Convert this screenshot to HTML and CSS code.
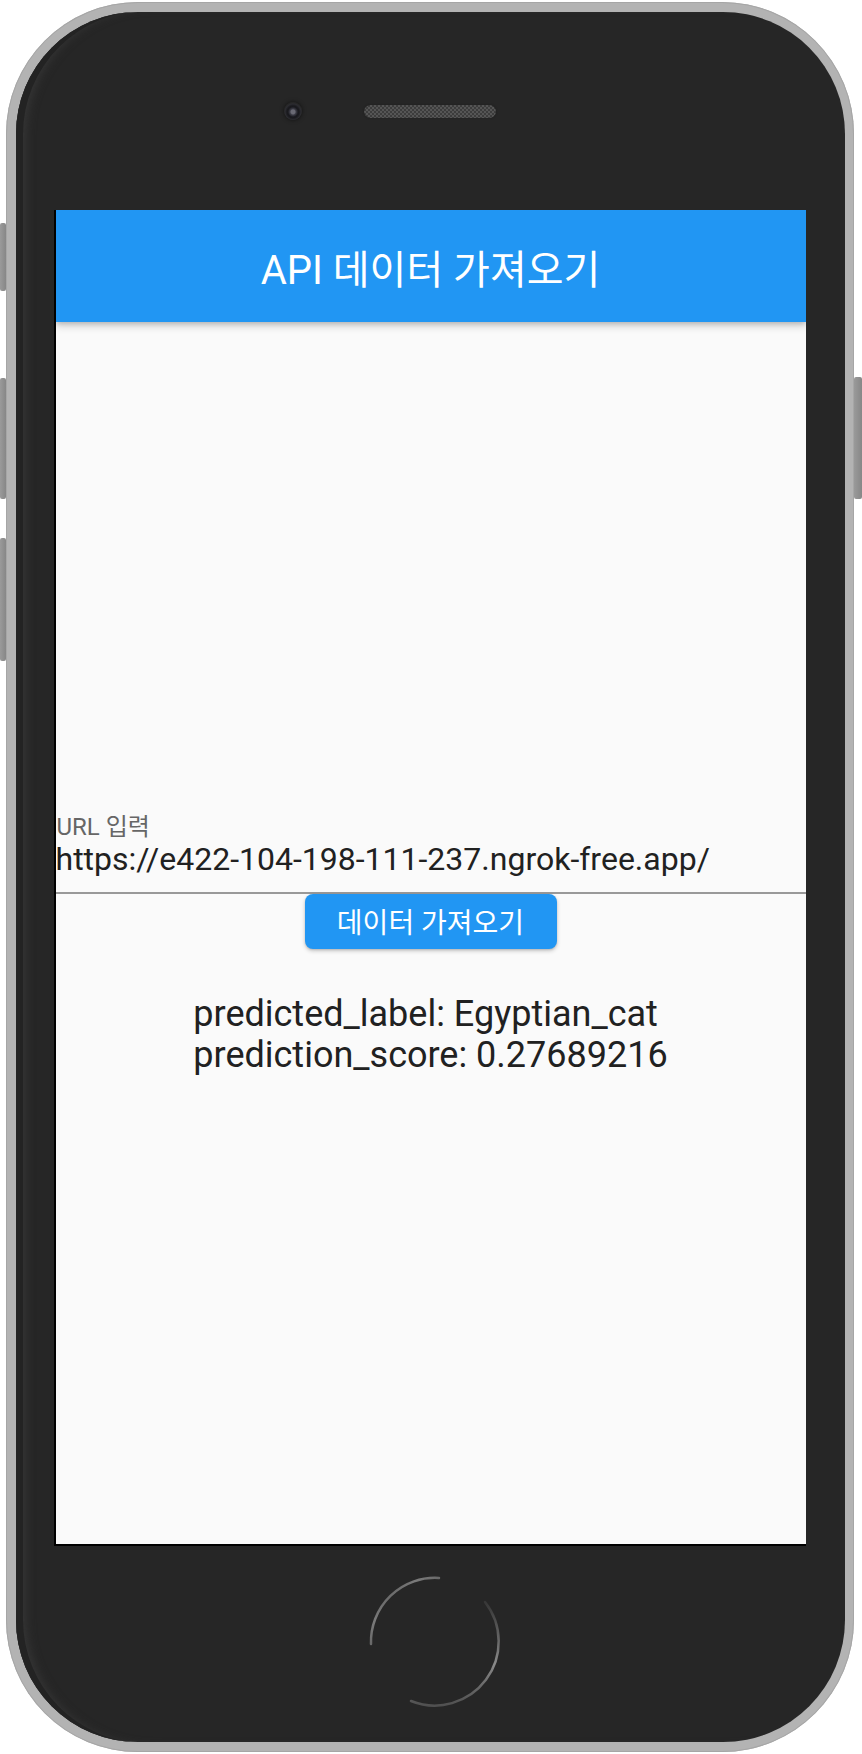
FILE: index.html
```html
<!DOCTYPE html>
<html lang="ko">
<head>
<meta charset="utf-8">
<title>API 데이터 가져오기</title>
<link rel="stylesheet" href="styles.css">
</head>
<body>
<div class="device">
  <span class="side-btn left b1"></span>
  <span class="side-btn left b2"></span>
  <span class="side-btn left b3"></span>
  <span class="side-btn right b4"></span>
  <div class="bezel">
    <div class="top-area">
      <div class="sensors">
        <span class="camera"></span>
        <span class="speaker"></span>
      </div>
    </div>
    <div class="screen">
      <header class="appbar">API 데이터 가져오기</header>
      <main class="content">
        <div class="field">
          <div class="field-label">URL 입력</div>
          <div class="field-value">https://e422-104-198-111-237.ngrok-free.app/</div>
        </div>
        <div class="btn-row">
          <button class="btn">데이터 가져오기</button>
        </div>
        <div class="result">
          <div class="result-text">
            <div>predicted_label: Egyptian_cat</div>
            <div>prediction_score: 0.27689216</div>
          </div>
        </div>
      </main>
    </div>
    <div class="bottom-area">
      <svg class="home" width="140" height="140" viewBox="0 0 140 140">
        <defs>
          <linearGradient id="ga" x1="0" y1="0" x2="1" y2="1">
            <stop offset="0" stop-color="#7a7a7a" stop-opacity="0.2"/>
            <stop offset="0.35" stop-color="#7a7a7a" stop-opacity="1"/>
            <stop offset="1" stop-color="#7a7a7a" stop-opacity="0.1"/>
          </linearGradient>
          <linearGradient id="gb" x1="0" y1="0" x2="0" y2="1">
            <stop offset="0" stop-color="#7a7a7a" stop-opacity="0.2"/>
            <stop offset="0.6" stop-color="#8a8a8a" stop-opacity="1"/>
            <stop offset="1" stop-color="#7a7a7a" stop-opacity="0.5"/>
          </linearGradient>
        </defs>
        <path d="M74 6 A64 64 0 0 0 6 72" fill="none" stroke="url(#ga)" stroke-width="2.5" stroke-linecap="round"/>
        <path d="M120 30 A64 64 0 0 1 46 129" fill="none" stroke="url(#gb)" stroke-width="2.5" stroke-linecap="round"/>
      </svg>
    </div>
  </div>
</div>
</body>
</html>
```
FILE: styles.css
```css
html, body {
  margin: 0;
  padding: 0;
  background: #ffffff;
}
body {
  width: 862px;
  height: 1754px;
  overflow: hidden;
  font-family: Roboto, "Noto Sans CJK KR", sans-serif;
}
.device {
  position: relative;
  box-sizing: border-box;
  width: 848px;
  height: 1750px;
  margin: 2px 0 0 6px;
  padding: 10px 9px 10px 10px;
  border-radius: 132px;
  background: #b3b3b3;
  box-shadow: inset 0 0 0 1px #a6a6a6;
}
.side-btn {
  position: absolute;
  background: linear-gradient(90deg, #9a9a9a, #878787);
  border-radius: 2px;
}
.side-btn.left { left: -6px; width: 6px; }
.side-btn.right { right: -8px; width: 8px; }
.b1 { top: 221px; height: 68px; }
.b2 { top: 376px; height: 121px; }
.b3 { top: 536px; height: 123px; }
.b4 { top: 375px; height: 122px; }

.bezel {
  box-sizing: border-box;
  height: 100%;
  border-radius: 122px;
  background: #262626;
  box-shadow: inset 8px 0 0 -1px #232323, inset 16px 0 10px -6px #363636;
  display: flex;
  flex-direction: column;
  align-items: center;
}
.top-area {
  align-self: stretch;
  height: 198px;
  box-sizing: border-box;
  padding-top: 90px;
}
.sensors {
  display: flex;
  align-items: center;
  gap: 62px;
  padding-left: 268px;
  height: 18px;
}
.camera {
  width: 18px;
  height: 18px;
  border-radius: 50%;
  background: radial-gradient(circle at 50% 55%, #6a6a74 0 2px, #3e3e48 3px, #1a1a1f 5px, #19191d 6px, #2c2c31 8px, #262626 9px);
  box-shadow: 0 0 4px rgba(0,0,0,0.6);
}
.speaker {
  width: 132px;
  height: 13px;
  border-radius: 7px;
  background-color: #3c3c3c;
  background-image:
    linear-gradient(45deg, #555 25%, transparent 25%, transparent 75%, #555 75%),
    linear-gradient(45deg, #555 25%, transparent 25%, transparent 75%, #555 75%);
  background-size: 4px 4px;
  background-position: 0 0, 2px 2px;
  box-shadow: 0 0 2px #1c1c1c;
}
.screen {
  width: 750px;
  height: 1334px;
  border-left: 2px solid #000;
  border-bottom: 2px solid #000;
  margin-right: 2px;
  background: #fafafa;
  display: flex;
  flex-direction: column;
  overflow: hidden;
}
.appbar {
  height: 112px;
  flex: none;
  background: #2196f3;
  color: #fff;
  font-size: 40px;
  display: flex;
  align-items: center;
  justify-content: center;
  box-shadow: 0 4px 8px rgba(0,0,0,0.18), 0 2px 4px rgba(0,0,0,0.12);
  position: relative;
  z-index: 1;
  padding-top: 2px;
  box-sizing: border-box;
}
.content {
  flex: 1;
  padding-top: 491px;
  display: flex;
  flex-direction: column;
}
.field {
  border-bottom: 2px solid #999;
  padding-bottom: 15px;
}
.field-label {
  font-size: 24px;
  line-height: 28px;
  color: #666;
  padding-left: 1px;
}
.field-value {
  font-size: 32px;
  line-height: 36px;
  color: #212121;
  white-space: nowrap;
}
.btn-row {
  display: flex;
  justify-content: center;
}
.btn {
  box-sizing: border-box;
  height: 55px;
  width: 252px;
  margin-left: 0;
  border: none;
  border-radius: 8px;
  background: #2196f3;
  color: #fff;
  font-family: Roboto, "Noto Sans CJK KR", sans-serif;
  font-size: 28px;
  padding: 0 0 2px;
  box-shadow: 0 2px 4px rgba(0,0,0,0.2), 0 1px 2px rgba(0,0,0,0.12);
}
.result {
  margin-top: 45px;
  display: flex;
  justify-content: center;
}
.result-text {
  font-size: 36px;
  line-height: 41px;
  color: #212121;
  text-align: left;
}
.bottom-area {
  flex: 1;
  display: flex;
  justify-content: center;
  padding-top: 26px;
  margin-left: 8px;
}
.home {
  display: block;
}
```
